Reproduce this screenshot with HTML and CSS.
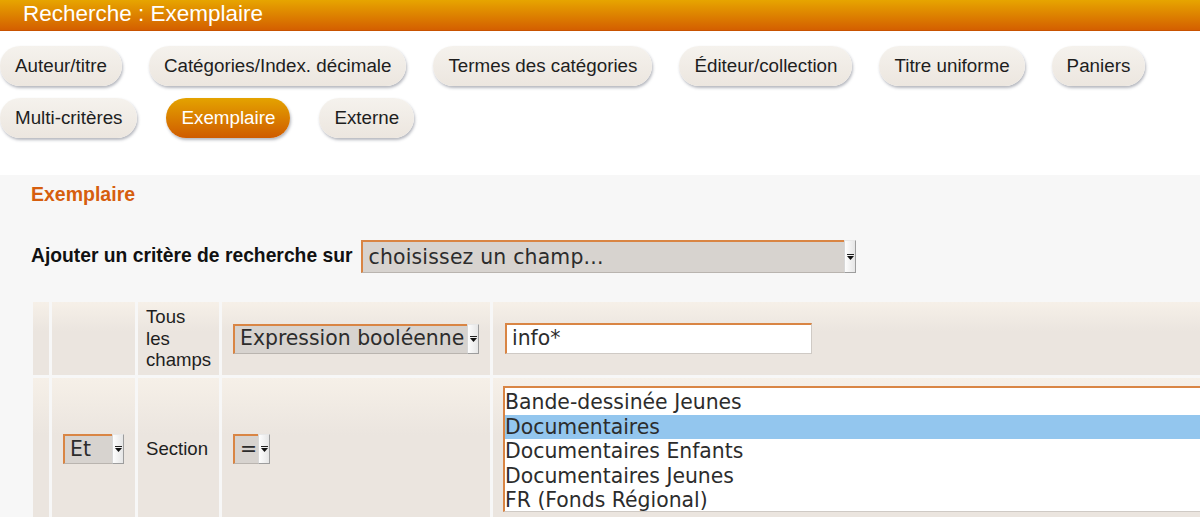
FILE: index.html
```html
<!DOCTYPE html>
<html lang="fr">
<head>
<meta charset="utf-8">
<title>Recherche : Exemplaire</title>
<link rel="stylesheet" href="styles.css">
</head>
<body>
<div class="header">Recherche : Exemplaire</div>
<nav class="tabs">
  <div class="tab-row">
    <a class="tab">Auteur/titre</a>
    <a class="tab">Catégories/Index. décimale</a>
    <a class="tab">Termes des catégories</a>
    <a class="tab">Éditeur/collection</a>
    <a class="tab">Titre uniforme</a>
    <a class="tab">Paniers</a>
  </div>
  <div class="tab-row second">
    <a class="tab">Multi-critères</a>
    <a class="tab active">Exemplaire</a>
    <a class="tab">Externe</a>
  </div>
</nav>
<section class="panel">
  <h2 class="panel-title">Exemplaire</h2>
  <div class="add-row">
    <span class="add-label">Ajouter un critère de recherche sur</span>
    <div class="select sel-field"><span class="sel-text">choisissez un champ...</span><span class="sel-btn"><svg width="7" height="6" viewBox="0 0 7 6"><rect x="0" y="0" width="7" height="1" fill="#222"/><polygon points="0,2 7,2 3.5,6" fill="#111"/></svg></span></div>
  </div>
  <table class="criteria">
    <colgroup>
      <col class="c0"><col class="c1"><col class="c2"><col class="c3"><col class="c4">
    </colgroup>
    <tr class="r1">
      <td></td>
      <td></td>
      <td class="lbl">Tous les champs</td>
      <td class="op"><div class="select sel-expr"><span class="sel-text">Expression booléenne</span><span class="sel-btn"><svg width="7" height="6" viewBox="0 0 7 6"><rect x="0" y="0" width="7" height="1" fill="#222"/><polygon points="0,2 7,2 3.5,6" fill="#111"/></svg></span></div></td>
      <td class="val"><div class="input">info*</div></td>
    </tr>
    <tr class="r2">
      <td></td>
      <td class="bool"><div class="select sel-et"><span class="sel-text">Et</span><span class="sel-btn"><svg width="7" height="6" viewBox="0 0 7 6"><rect x="0" y="0" width="7" height="1" fill="#222"/><polygon points="0,2 7,2 3.5,6" fill="#111"/></svg></span></div></td>
      <td class="lbl">Section</td>
      <td class="op"><div class="select sel-eq"><span class="sel-text">=</span><span class="sel-btn"><svg width="7" height="6" viewBox="0 0 7 6"><rect x="0" y="0" width="7" height="1" fill="#222"/><polygon points="0,2 7,2 3.5,6" fill="#111"/></svg></span></div></td>
      <td class="val">
        <div class="listbox">
          <div class="opt">Bande-dessinée Jeunes</div>
          <div class="opt sel">Documentaires</div>
          <div class="opt">Documentaires Enfants</div>
          <div class="opt">Documentaires Jeunes</div>
          <div class="opt">FR (Fonds Régional)</div>
        </div>
      </td>
    </tr>
  </table>
</section>
</body>
</html>
```
FILE: styles.css
```css
html, body {
  margin: 0;
  padding: 0;
  background: #ffffff;
  overflow: hidden;
  height: 517px;
  font-family: "Liberation Sans", Arial, sans-serif;
  color: #1a1a1a;
}

.header {
  height: 30px;
  line-height: 28px;
  padding-left: 23px;
  font-size: 22.5px;
  color: #ffffff;
  background: linear-gradient(#e7a500, #d45f00);
  border-bottom: 1px solid #c85200;
}

.tabs {
  padding-top: 15px;
  display: flex;
  flex-direction: column;
  gap: 12px;
}

.tab-row {
  display: flex;
  gap: 27px;
}

.tab-row.second {
  gap: 29px;
}

.tab {
  display: block;
  height: 40px;
  line-height: 40px;
  padding: 0 15px;
  border-radius: 20px;
  font-size: 18.8px;
  color: #1e1e1e;
  background: linear-gradient(#f5f2ed, #ece6df);
  box-shadow: 1px 2px 3px rgba(90, 95, 110, 0.45);
  white-space: nowrap;
}

.tab.active {
  color: #ffffff;
  background: linear-gradient(#e4a300, #cf5b00);
}

.panel {
  margin-top: 37px;
  background: #f7f7f7;
  padding: 8px 0 0 31px;
  height: 400px;
}

.panel-title {
  margin: 0;
  font-size: 19.5px;
  line-height: 22px;
  font-weight: bold;
  color: #d65e0e;
}

.add-row {
  margin-top: 35px;
  display: flex;
  align-items: center;
  gap: 9px;
}

.add-label {
  font-size: 19.3px;
  font-weight: bold;
  color: #111;
  position: relative;
  top: -1px;
}

.select {
  display: flex;
  box-sizing: border-box;
  background: #d7d3cf;
  border: 1px solid #b9b4af;
  border-top: 2px solid #d98544;
  border-left: 2px solid #d98544;
  font-family: "DejaVu Sans", sans-serif;
  font-size: 20.4px;
  color: #2c2c2c;
  white-space: nowrap;
}

.sel-text {
  flex: 1;
  padding-left: 5px;
  overflow: hidden;
  display: flex;
  align-items: center;
}

.sel-btn {
  width: 12px;
  flex: none;
  box-sizing: border-box;
  margin: -2px -1px -1px 0;
  background: linear-gradient(90deg, #fdfdfd, #e6e6e6);
  border: 1px solid #9d9d9d;
  border-left-color: #d8d8d8;
  border-top-color: #e8e8e8;
  display: flex;
  align-items: center;
  justify-content: center;
}

.sel-btn svg {
  display: block;
}

.sel-field {
  width: 495px;
  height: 33px;
}

.sel-field .sel-text {
  letter-spacing: 0.2px;
}

.sel-expr {
  width: 246px;
  height: 30px;
  margin-left: 3px;
}

.sel-et {
  width: 61px;
  height: 30px;
  margin: 0 auto;
}

.sel-eq {
  width: 37px;
  height: 30px;
  margin-left: 3px;
}

.criteria {
  margin: 26px 0 0 -1px;
  border-collapse: separate;
  border-spacing: 3px;
  table-layout: fixed;
  width: 1266px;
}

.c0 { width: 16px; }
.c1 { width: 83px; }
.c2 { width: 81px; }
.c3 { width: 268px; }
.c4 { width: 800px; }

.criteria td {
  box-sizing: border-box;
  background: linear-gradient(#f6f0e8, #ebe5df 40%, #ebe5df);
  padding: 4px 8px;
  vertical-align: middle;
  font-size: 18.6px;
  line-height: 21.5px;
  color: #1e1e1e;
}

.r1 td {
  height: 73px;
}

.r2 td {
  height: 142px;
  padding-top: 8px;
  padding-bottom: 8px;
}

.criteria td.bool {
  padding: 0;
}

.criteria td.val {
  padding-left: 12px;
  padding-right: 0;
}

.r2 td.val {
  vertical-align: top;
}

.input {
  box-sizing: border-box;
  width: 307px;
  height: 31px;
  background: #ffffff;
  border: 1px solid #cfcac5;
  border-top: 2px solid #d98544;
  border-left: 2px solid #d98544;
  padding-left: 5px;
  font-family: "DejaVu Sans", sans-serif;
  font-size: 20.4px;
  line-height: 27px;
  color: #2c2c2c;
}

.listbox {
  box-sizing: border-box;
  width: 760px;
  height: 126px;
  margin-left: -2px;
  background: #ffffff;
  border: 1px solid #cfcac5;
  border-top: 2px solid #d98544;
  border-left: 2px solid #d98544;
  padding-top: 2px;
  overflow: hidden;
  font-family: "DejaVu Sans", sans-serif;
  font-size: 20.4px;
  color: #2c2c2c;
}

.opt {
  height: 24.6px;
  line-height: 24.6px;
  white-space: nowrap;
}

.opt.sel {
  background: #93c6ee;
}
```
